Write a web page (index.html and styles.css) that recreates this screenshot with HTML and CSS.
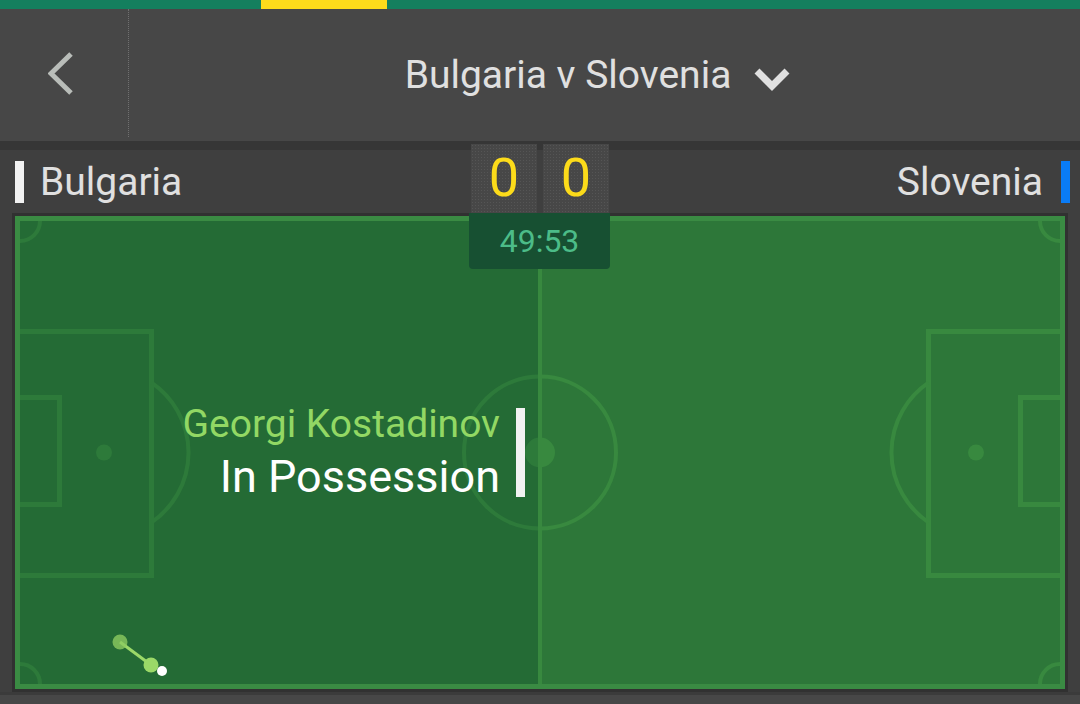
FILE: index.html
```html
<!DOCTYPE html>
<html lang="en">

<head>
  <meta charset="UTF-8">
  <meta name="viewport" content="width=device-width, initial-scale=1.0">
  <title>Bulgaria v Slovenia</title>
  <link rel="stylesheet" href="styles.css">
</head>

<body>
  <div class="stripe"><span class="stripe-active"></span></div>

  <header class="header">
    <div class="back">
      <svg width="26" height="44" viewBox="0 0 26 44">
        <polyline points="23,3 3,22.5 23,42" fill="none" stroke="#b9bdb9" stroke-width="5" />
      </svg>
    </div>
    <div class="title">
      <span>Bulgaria v Slovenia</span>
      <svg class="caret" width="36" height="24" viewBox="0 0 36 24">
        <polyline points="3,4 18,19 33,4" fill="none" stroke="#e0e0e0" stroke-width="7" />
      </svg>
    </div>
  </header>

  <div class="teams">
    <div class="team">
      <span class="team-bar home"></span>
      <span class="team-name">Bulgaria</span>
    </div>
    <div class="score">
      <div class="score-box">0</div>
      <div class="score-box">0</div>
      <div class="clock">49:53</div>
    </div>
    <div class="team away">
      <span class="team-name">Slovenia</span>
      <span class="team-bar visitor"></span>
    </div>
  </div>

  <div class="pitch">
    <div class="field">
      <svg width="1040" height="463" viewBox="0 0 1040 463">
        <rect width="1040" height="463" fill="#2d7739" />
        <g fill="none" stroke="#38893f">
          <!-- left end -->
          <path d="M0 110.5 H131.5 V354.5 H0" stroke-width="5" />
          <path d="M0 176.5 H39.5 V283.5 H0" stroke-width="5" />
          <path d="M131.5 161.6 A84.5 84.5 0 0 1 131.5 301.4" stroke-width="4" />
          <!-- right end -->
          <path d="M1040 110.5 H908.5 V354.5 H1040" stroke-width="5" />
          <path d="M1040 176.5 H1000.5 V283.5 H1040" stroke-width="5" />
          <path d="M908.5 161.6 A84.5 84.5 0 0 0 908.5 301.4" stroke-width="4" />
          <!-- corners -->
          <path d="M20 0 A20 20 0 0 1 0 20" stroke-width="4" />
          <path d="M1020 0 A20 20 0 0 0 1040 20" stroke-width="4" />
          <path d="M20 463 A20 20 0 0 0 0 443" stroke-width="4" />
          <path d="M1020 463 A20 20 0 0 1 1040 443" stroke-width="4" />
          <circle cx="520" cy="231.5" r="76" stroke-width="4" />
        </g>
        <g fill="#38893f">
          <circle cx="84" cy="231.5" r="8" />
          <circle cx="956" cy="231.5" r="8" />
          <circle cx="520" cy="231.5" r="15" />
        </g>
        <!-- team in possession shading -->
        <rect width="518" height="463" fill="rgba(0, 55, 40, 0.18)" />
        <rect x="518" width="4" height="463" fill="#38893f" />
        <!-- ball trail -->
        <line x1="100" y1="421" x2="131" y2="444" stroke="#9bd968" stroke-width="3" />
        <circle cx="100" cy="421" r="7.5" fill="#8ccb60" opacity="0.8" />
        <circle cx="131" cy="444" r="7.5" fill="#9bd968" />
        <circle cx="142" cy="450" r="5" fill="#ffffff" />
      </svg>

      <div class="possession">
        <div class="possession-text">
          <div class="player">Georgi Kostadinov</div>
          <div class="state">In Possession</div>
        </div>
        <span class="possession-bar"></span>
      </div>
    </div>
  </div>

  <div class="footer"></div>
</body>

</html>
```

FILE: styles.css
```css
body {
  margin: 0;
  background-color: #3f3f3f;
  font-family: Roboto, "Liberation Sans", sans-serif;
  color: #e0e0e0;
}

.stripe {
  height: 9px;
  background-color: #147f5e;
  display: flex;
}

.stripe-active {
  width: 126px;
  margin-left: 261px;
  background-color: #fddb1b;
}

.header {
  height: 132px;
  background-color: #474747;
  display: flex;
}

.back {
  width: 129px;
  height: 128px;
  border-right: 1px dotted #707070;
  display: flex;
  align-items: center;
  padding-left: 48px;
  box-sizing: border-box;
}

.back svg {
  display: block;
}

.title {
  flex: 1;
  display: flex;
  align-items: center;
  justify-content: center;
  padding-right: 14px;
  font-size: 39px;
  color: #e0e0e0;
}

.caret {
  display: block;
  margin-left: 23px;
  margin-top: 7px;
}

.teams {
  height: 58px;
  border-top: 9px solid #363636;
  padding-bottom: 5px;
  display: grid;
  grid-template-columns: 1fr auto 1fr;
  align-items: center;
}

.team {
  display: flex;
  align-items: center;
  gap: 16px;
  padding-left: 15px;
  font-size: 39px;
}

.team.away {
  justify-content: flex-end;
  gap: 18px;
  padding-left: 0;
  padding-right: 10px;
}

.team-bar {
  width: 9px;
  height: 42px;
}

.team-bar.home {
  background-color: #f2f2f2;
}

.team-bar.visitor {
  background-color: #0a7cf6;
}

.score {
  position: relative;
  align-self: start;
  margin-top: -6px;
  display: flex;
  gap: 6px;
}

.score-box {
  width: 66px;
  height: 69px;
  line-height: 67px;
  text-align: center;
  font-size: 54px;
  color: #fcdb1a;
  background-color: #474747;
  background-image: radial-gradient(circle, rgba(255, 255, 255, 0.08) 0.8px, transparent 1px);
  background-size: 3px 3px;
}

.clock {
  position: absolute;
  top: 69px;
  left: -2px;
  z-index: 2;
  width: 141px;
  height: 56px;
  line-height: 56px;
  text-align: center;
  font-size: 32px;
  color: #4cbc88;
  background-color: #175032;
  border-radius: 0 0 4px 4px;
}

.pitch {
  margin: 0 12px;
  border: 3px solid #313131;
}

.field {
  position: relative;
  border: 5px solid #3a8b43;
  height: 463px;
}

.field svg {
  display: block;
}

.possession {
  position: absolute;
  top: 187px;
  right: 535px;
  display: flex;
  align-items: flex-start;
  gap: 16px;
}

.possession-text {
  margin-top: -6px;
  text-align: right;
  white-space: nowrap;
}

.player {
  font-size: 39px;
  line-height: 45px;
  color: #92d864;
}

.state {
  font-size: 45px;
  line-height: 59px;
  color: #ffffff;
}

.possession-bar {
  width: 9px;
  height: 89px;
  background-color: #f2f2f2;
}

.footer {
  height: 9px;
  border-top: 3px solid #3b3b3b;
  background-color: #474747;
}
```
